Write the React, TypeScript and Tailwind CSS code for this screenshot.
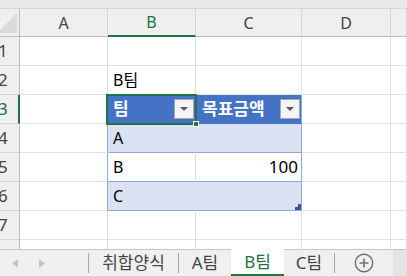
import React from "react";

const font = { fontFamily: '"Noto Sans", "Noto Sans CJK KR", sans-serif' };

const DropButton = () => (
  <div className="ml-auto mr-[1px] flex h-[20px] w-[20px] shrink-0 items-center justify-center border border-[#a6a6a6] bg-[#f4f4f4]">
    <svg width="8" height="5" viewBox="0 0 8 5">
      <polygon points="0,0 8,0 4,4" fill="#595959" />
    </svg>
  </div>
);

const ColHead = ({ label, active }: { label: string; active?: boolean }) => (
  <div
    className={`flex items-center justify-center border-r border-[#d5d5d5] bg-[#efefef] text-[16px] ${
      active ? "border-b-2 border-b-[#217346] text-[#217346]" : "border-b border-b-[#bcbcbc] text-[#444]"
    }`}
  >
    {label}
  </div>
);

const RowHead = ({ n, active }: { n: string; active?: boolean }) => (
  <div
    className={`flex items-center overflow-hidden border-b border-[#d5d5d5] bg-[#efefef] text-[17px] ${
      active ? "border-r-2 border-r-[#217346] text-[#217346]" : "border-r border-r-[#bcbcbc] text-[#444]"
    }`}
  >
    <span className="-ml-[2px]">{n}</span>
  </div>
);

const Cell = ({ className = "", children }: { className?: string; children?: React.ReactNode }) => (
  <div className={`flex items-center overflow-visible whitespace-nowrap border-b border-r text-[16px] text-black ${className}`}>
    {children}
  </div>
);

const g = "border-[#e1e1e1]";

export default function App() {
  return (
    <div className="relative h-[276px] w-[407px] overflow-hidden bg-white" style={font}>
      {/* top strip */}
      <div className="h-[9px] border-b border-[#d6d6d6] bg-[#e9e9e9]" />

      {/* sheet */}
      <div className="relative grid grid-cols-[20px_88px_88px_106px_89px_16px] grid-rows-[28px_repeat(7,29px)_12px]">
        {/* corner */}
        <div className="border-b border-r border-[#bcbcbc] bg-[#efefef]">
          <svg width="19" height="27" viewBox="0 0 19 27">
            <polygon points="17,4 17,24 -3,24" fill="#dadada" />
          </svg>
        </div>
        <ColHead label="A" />
        <ColHead label="B" active />
        <ColHead label="C" />
        <ColHead label="D" />
        <ColHead label="" />

        {/* row 1 */}
        <RowHead n="1" />
        <Cell className={g} />
        <Cell className={g} />
        <Cell className={g} />
        <Cell className={g} />
        <Cell className={g} />

        {/* row 2 */}
        <RowHead n="2" />
        <Cell className={g} />
        <Cell className={`${g} pl-[5px]`}>B팀</Cell>
        <Cell className={g} />
        <Cell className={g} />
        <Cell className={g} />

        {/* row 3 - table header */}
        <RowHead n="3" active />
        <Cell className={g} />
        <Cell className="border-[#4472c4] bg-[#4472c4] pl-[5px] text-[17px] font-bold text-white">
          팀
          <DropButton />
        </Cell>
        <Cell className="border-b-[#4472c4] border-r-[#8ea9db] bg-[#4472c4] pl-[6px] text-[17px] font-bold text-white">
          목표금액
          <DropButton />
        </Cell>
        <Cell className={g} />
        <Cell className={g} />

        {/* row 4 */}
        <RowHead n="4" />
        <Cell className="border-b-[#e1e1e1] border-r-[#8ea9db]" />
        <Cell className="border-b-[#8ea9db] border-r-[#d9e1f2] bg-[#d9e1f2] pl-[5px]">A</Cell>
        <Cell className="border-b-[#8ea9db] border-r-[#8ea9db] bg-[#d9e1f2]" />
        <Cell className={g} />
        <Cell className={g} />

        {/* row 5 */}
        <RowHead n="5" />
        <Cell className="border-b-[#e1e1e1] border-r-[#8ea9db]" />
        <Cell className="border-b-[#8ea9db] border-r-[#e1e1e1] pl-[5px]">B</Cell>
        <Cell className="justify-end border-b-[#8ea9db] border-r-[#8ea9db] pr-[3px] text-[17px]">100</Cell>
        <Cell className={g} />
        <Cell className={g} />

        {/* row 6 */}
        <RowHead n="6" />
        <Cell className="border-b-[#e1e1e1] border-r-[#8ea9db]" />
        <Cell className="border-b-[#8ea9db] border-r-[#d9e1f2] bg-[#d9e1f2] pl-[5px]">C</Cell>
        <Cell className="relative border-b-[#8ea9db] border-r-[#8ea9db] bg-[#d9e1f2]">
          <svg className="absolute bottom-0 right-0" width="6" height="6" viewBox="0 0 6 6">
            <polygon points="6,0 6,6 0,6 0,3 3,3 3,0" fill="#3f4fa8" />
          </svg>
        </Cell>
        <Cell className={g} />
        <Cell className={g} />

        {/* row 7 */}
        <RowHead n="7" />
        <Cell className={g} />
        <Cell className={g} />
        <Cell className={g} />
        <Cell className={g} />
        <Cell className={g} />

        {/* row 8 partial */}
        <RowHead n="" />
        <Cell className={g} />
        <Cell className={g} />
        <Cell className={g} />
        <Cell className={g} />
        <Cell className={g} />

        {/* selection on B3 */}
        <div className="pointer-events-none absolute left-[106px] top-[85px] h-[31px] w-[91px] border-2 border-[#217346]">
          <div className="absolute -bottom-[4px] -right-[4px] h-[6px] w-[6px] border border-white bg-[#217346]" />
        </div>
      </div>

      {/* sheet tabs */}
      <div className="absolute bottom-0 left-0 flex h-[27px] w-full border-t border-[#c6c6c6] bg-[#f0f0f0] text-[17px] text-[#444]">
        <div className="flex w-[88px] items-center gap-[21px] pl-[12px]">
          <svg width="6" height="9" viewBox="0 0 6 9">
            <polygon points="6,0 6,9 0,4.5" fill="#c4c4c4" />
          </svg>
          <svg width="6" height="9" viewBox="0 0 6 9">
            <polygon points="0,0 0,9 6,4.5" fill="#c4c4c4" />
          </svg>
        </div>
        <div className="my-[3px] w-px bg-[#a8a8a8]" />
        <div className="flex w-[89px] items-center justify-center">취합양식</div>
        <div className="my-[3px] w-px bg-[#a8a8a8]" />
        <div className="flex w-[52px] items-center justify-center">A팀</div>
        <div className="-mt-px flex w-[53px] items-center justify-center border-b-2 border-[#217346] bg-white text-[#217346]">
          B팀
        </div>
        <div className="flex w-[50px] items-center justify-center">C팀</div>
        <div className="my-[3px] w-px bg-[#a8a8a8]" />
        <div className="flex w-[58px] items-center justify-center">
          <svg width="20" height="20" viewBox="0 0 20 20">
            <circle cx="10" cy="10" r="8.7" fill="none" stroke="#6f6f6f" strokeWidth="1.4" />
            <path d="M10 5.5v9M5.5 10h9" stroke="#6f6f6f" strokeWidth="1.6" />
          </svg>
        </div>
        <div className="flex-1 bg-[#e4e4e4]" />
      </div>
    </div>
  );
}
